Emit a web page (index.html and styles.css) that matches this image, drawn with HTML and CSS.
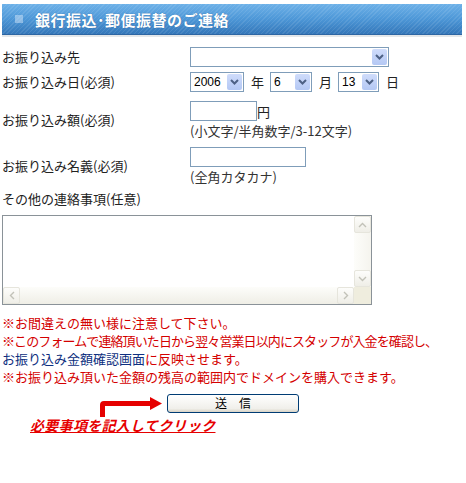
FILE: index.html
```html
<!DOCTYPE html>
<html lang="ja">
<head>
    <meta charset="UTF-8">
    <title>銀行振込･郵便振替のご連絡</title>
    <link rel="stylesheet" href="styles.css">
</head>
<body>
    <div class="head">
        <span class="head-icon"></span>
        <h1>銀行振込･郵便振替のご連絡</h1>
    </div>

    <form class="form">
        <div class="row row-site">
            <div class="label">お振り込み先</div>
            <span class="sel"><select class="w-site"><option></option></select><span class="sel-btn"><svg width="9" height="6" viewBox="0 0 9 6"><polyline points="1,1 4.5,4.5 8,1" fill="none" stroke="#4d6185" stroke-width="2"/></svg></span></span>
        </div>

        <div class="row row-date">
            <div class="label">お振り込み日(必須)</div>
            <span class="sel"><select class="w-year"><option>2006</option></select><span class="sel-btn"><svg width="9" height="6" viewBox="0 0 9 6"><polyline points="1,1 4.5,4.5 8,1" fill="none" stroke="#4d6185" stroke-width="2"/></svg></span></span>
            <span class="unit">年</span>
            <span class="sel"><select class="w-month"><option>6</option></select><span class="sel-btn"><svg width="9" height="6" viewBox="0 0 9 6"><polyline points="1,1 4.5,4.5 8,1" fill="none" stroke="#4d6185" stroke-width="2"/></svg></span></span>
            <span class="unit">月</span>
            <span class="sel"><select class="w-day"><option>13</option></select><span class="sel-btn"><svg width="9" height="6" viewBox="0 0 9 6"><polyline points="1,1 4.5,4.5 8,1" fill="none" stroke="#4d6185" stroke-width="2"/></svg></span></span>
            <span class="unit">日</span>
        </div>

        <div class="row row-amount">
            <div class="label">お振り込み額(必須)</div>
            <div class="field">
                <div class="amount-line"><input type="text" class="w-amount"><span class="yen">円</span></div>
                <div class="hint">(小文字/半角数字/3-12文字)</div>
            </div>
        </div>

        <div class="row row-name">
            <div class="label">お振り込み名義(必須)</div>
            <div class="field">
                <div><input type="text" class="w-name"></div>
                <div class="hint">(全角カタカナ)</div>
            </div>
        </div>

        <div class="other-label">その他の連絡事項(任意)</div>
        <div class="memo-box">
            <textarea class="memo"></textarea>
            <div class="vbar">
                <span class="sb-btn"><svg width="9" height="6" viewBox="0 0 9 6"><polyline points="1,5 4.5,1.5 8,5" fill="none" stroke="#c2c2b8" stroke-width="1.4"/></svg></span>
                <span class="sb-btn"><svg width="9" height="6" viewBox="0 0 9 6"><polyline points="1,1 4.5,4.5 8,1" fill="none" stroke="#c2c2b8" stroke-width="1.4"/></svg></span>
            </div>
            <div class="hbar">
                <span class="sb-btn"><svg width="6" height="9" viewBox="0 0 6 9"><polyline points="5,1 1.5,4.5 5,8" fill="none" stroke="#c2c2b8" stroke-width="1.4"/></svg></span>
                <span class="sb-btn"><svg width="6" height="9" viewBox="0 0 6 9"><polyline points="1,1 4.5,4.5 1,8" fill="none" stroke="#c2c2b8" stroke-width="1.4"/></svg></span>
            </div>
            <div class="sb-corner"></div>
        </div>

        <div class="notes">
            <div>※お間違えの無い様に注意して下さい。</div>
            <div class="tight">※このフォームで連絡頂いた日から翌々営業日以内にスタッフが入金を確認し、</div>
            <div><span class="blue">お振り込み金額確認画面</span>に反映させます。</div>
            <div>※お振り込み頂いた金額の残高の範囲内でドメインを購入できます。</div>
        </div>

        <div class="send-area">
            <svg class="arrow" width="66" height="24" viewBox="0 0 66 24">
                <path d="M2 22 V10 Q2 6 6 6 H52 V2 L64 8.5 L52 15 V11 H7 V22 Z" fill="#e60000"/>
            </svg>
            <div class="send-row">
                <button type="button" class="send">送　信</button>
            </div>
            <div class="click-hint">必要事項を記入してクリック</div>
        </div>
    </form>
</body>
</html>
```

FILE: styles.css
```css
body {
    margin: 0;
    padding: 4px 2px 0;
    font-family: "Noto Sans CJK JP", sans-serif;
    font-size: 13px;
    color: #222;
    background: #fff;
}
.head {
    width: 460px;
    height: 30px;
    display: flex;
    align-items: center;
    background:
        repeating-linear-gradient(135deg, rgba(255,255,255,0.09) 0 1px, transparent 1px 3px),
        linear-gradient(#6db1e8, #4d97d7 50%, #3477b9);
    border-bottom: 1px solid #2d66a3;
    box-shadow: 0 2px 0 #e3e7ea;
}
.head-icon {
    width: 8px;
    height: 8px;
    margin-left: 13px;
    background-image: radial-gradient(circle, rgba(225,238,252,0.95) 0.6px, transparent 0.8px);
    background-size: 2px 2px;
    background-position: 0 0;
}
.head h1 {
    margin: 0 0 0 12px;
    font-size: 15px;
    font-weight: bold;
    color: #fff;
    letter-spacing: 0.5px;
    line-height: 1;
    text-shadow: 0 0 1px #2a5f98;
}
.row {
    display: flex;
    align-items: center;
    line-height: 18px;
}
.label {
    width: 188px;
    flex: none;
}
.row-site {
    margin-top: 12px;
}
.row-date {
    margin-top: 5px;
}
.row-amount {
    margin-top: 9px;
}
.row-name {
    margin-top: 8px;
}
.sel {
    position: relative;
    display: inline-block;
    height: 20px;
}
.sel select {
    appearance: none;
    -webkit-appearance: none;
    height: 20px;
    margin: 0;
    border: 1px solid #7f9db9;
    border-radius: 0;
    background: #fff;
    font-family: "Liberation Sans", sans-serif;
    font-size: 12px;
    color: #000;
    padding: 0 0 0 3px;
}
.sel-btn {
    position: absolute;
    right: 2px;
    top: 2px;
    width: 15px;
    height: 16px;
    border-radius: 2px;
    background: linear-gradient(#cfdcfb, #b4c8f4);
    display: flex;
    align-items: center;
    justify-content: center;
    pointer-events: none;
}
.w-site { width: 199px; }
.w-year { width: 54px; }
.w-month { width: 42px; }
.w-day { width: 41px; }
.unit {
    margin: 0 6px 0 7px;
}
input {
    height: 20px;
    box-sizing: border-box;
    margin: 0;
    border: 1px solid #7f9db9;
    padding: 0 2px;
    vertical-align: bottom;
}
.w-amount { width: 67px; }
.w-name { width: 116px; }
.amount-line {
    display: flex;
    align-items: center;
    height: 20px;
}
.yen {
    line-height: 18px;
    padding-top: 1px;
}
.hint {
    margin-top: 1px;
    color: #333;
    line-height: 17px;
}
.other-label {
    margin-top: 5px;
    line-height: 18px;
}
.memo-box {
    margin-top: 7px;
    width: 370px;
    height: 90px;
    box-sizing: border-box;
    border: 1px solid #8a9298;
    display: grid;
    grid-template-columns: 1fr 17px;
    grid-template-rows: 1fr 17px;
}
.memo {
    display: block;
    border: none;
    margin: 0;
    padding: 2px;
    resize: none;
    outline: none;
    overflow: hidden;
}
.vbar {
    display: flex;
    flex-direction: column;
    justify-content: space-between;
    background: linear-gradient(90deg, #fdfdfa, #f5f4ee);
}
.hbar {
    display: flex;
    justify-content: space-between;
    background: linear-gradient(#fdfdfa, #efeee6);
}
.sb-btn {
    width: 17px;
    height: 17px;
    box-sizing: border-box;
    border: 1px solid #e6e5dc;
    border-radius: 2px;
    background: linear-gradient(#fdfdfb, #efeee7);
    display: flex;
    align-items: center;
    justify-content: center;
}
.sb-corner {
    background: #efedde;
}
.notes {
    margin-top: 9px;
    line-height: 18px;
    color: #d40000;
    white-space: nowrap;
}
.tight {
    letter-spacing: -0.9px;
}
.blue {
    color: #0d2f80;
}
.send-area {
    position: relative;
    margin-top: 7px;
}
.arrow {
    position: absolute;
    left: 96px;
    top: 2px;
}
.send-row {
    padding-left: 165px;
}
.send {
    width: 132px;
    height: 19px;
    padding: 0;
    border: 1px solid #003c74;
    border-radius: 3px;
    background: linear-gradient(#ffffff, #f0efea 80%, #d8d3c6);
    font-family: "Noto Sans CJK JP", sans-serif;
    font-size: 12px;
    line-height: 16px;
    color: #000;
}
.click-hint {
    margin: 3px 0 0 28px;
    font-size: 14px;
    font-weight: bold;
    font-style: italic;
    text-decoration: underline;
    color: #e60000;
    line-height: 18px;
    letter-spacing: 0.3px;
}
```
